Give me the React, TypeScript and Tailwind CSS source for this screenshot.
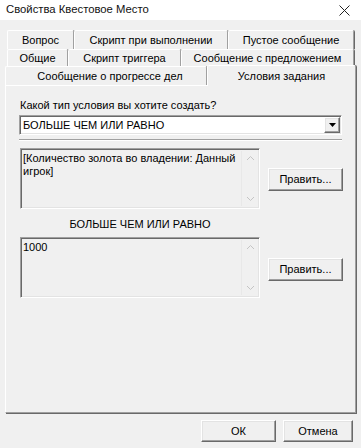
import React from "react";

const font = { fontFamily: '"Liberation Sans", Arial, sans-serif' };

const raised =
  "border border-t-white border-l-white border-r-[#696969] border-b-[#696969] shadow-[inset_-1px_-1px_0_#a0a0a0,inset_1px_1px_0_#e3e3e3] bg-[#f0f0f0]";
const sunken =
  "border border-t-[#a0a0a0] border-l-[#a0a0a0] border-r-white border-b-white shadow-[inset_1px_1px_0_#696969,inset_-1px_-1px_0_#e3e3e3]";

function Tab({ w, label, pl = 0 }: { w: number; label: string; pl?: number }) {
  return (
    <div
      className="h-full flex items-center justify-center border-t border-l border-white border-r border-r-[#a0a0a0] shadow-[1px_0_0_#696969] rounded-t-[2px] text-black leading-none text-[11px]"
      style={{ width: w, paddingLeft: pl }}
    >
      {label}
    </div>
  );
}

function ScrollBox({ children }: { children: React.ReactNode }) {
  return (
    <div className={`w-[240px] h-[61px] flex ${sunken} bg-[#f0f0f0]`}>
      <div className="flex-1 pl-[2px] pt-[3px] text-[11px] leading-[13px] text-black">{children}</div>
      <div className="w-[17px] my-[2px] mr-[1px] border-l border-[#e8e8e8] flex flex-col items-center justify-between py-[4px]">
        <svg width="9" height="6" viewBox="0 0 9 6">
          <path d="M1 5 L4.5 1.5 L8 5" fill="none" stroke="#c4c4c4" strokeWidth="1" />
        </svg>
        <svg width="9" height="6" viewBox="0 0 9 6">
          <path d="M1 1 L4.5 4.5 L8 1" fill="none" stroke="#c4c4c4" strokeWidth="1" />
        </svg>
      </div>
    </div>
  );
}

function Btn({ w, h, label }: { w: number; h: number; label: string }) {
  return (
    <div
      className={`${raised} flex items-center justify-center text-[11px] text-black`}
      style={{ width: w, height: h }}
    >
      {label}
    </div>
  );
}

export default function App() {
  return (
    <div className="w-[361px] h-[448px] bg-[#f0f0f0] overflow-hidden flex flex-col" style={font}>
      {/* Title bar */}
      <div className="h-[20px] bg-white flex items-center justify-between pl-[6px] pr-[11px]">
        <span className="text-[11.3px] text-[#111] leading-none">Свойства Квестовое Место</span>
        <svg width="11" height="11" viewBox="0 0 11 11">
          <path d="M0.5 0.5 L10.5 10.5 M10.5 0.5 L0.5 10.5" stroke="#222" strokeWidth="1" />
        </svg>
      </div>

      {/* Tabs */}
      <div className="mt-[10px] flex flex-col">
        <div className="h-[19px] flex pl-[7px]">
          <Tab w={67} label="Вопрос" />
          <Tab w={154} label="Скрипт при выполнении" />
          <Tab w={126} label="Пустое сообщение" />
        </div>
        <div className="h-[17px] flex pl-[7px]">
          <Tab w={61} label="Общие" />
          <Tab w={113} label="Скрипт триггера" />
          <Tab w={173} label="Сообщение с предложением" />
        </div>
        <div className="h-[19px] flex pl-[5px] items-end">
          <Tab w={202} label="Сообщение о прогрессе дел" pl={8} />
          <div className="w-[149px] h-[21px] mb-[-1px] relative z-10 bg-[#f0f0f0] flex items-start justify-center pt-[5px] border-t border-l border-white border-r border-r-[#a0a0a0] shadow-[1px_0_0_#696969] rounded-t-[2px] text-[11px] leading-none text-black">
            Условия задания
          </div>
        </div>
      </div>

      {/* Panel */}
      <div className="ml-[5px] w-[351px] h-[328px] border-t border-l border-white border-r border-b border-r-[#a0a0a0] border-b-[#a0a0a0] shadow-[1px_1px_0_#696969] flex flex-col">
        <div className="ml-[14px] mt-[13px] text-[11px] leading-[13px] text-black">
          Какой тип условия вы хотите создать?
        </div>
        <div className={`ml-[13px] mt-[3px] w-[323px] h-[20px] bg-white ${sunken} flex items-center`}>
          <span className="flex-1 pl-[3px] text-[11px] text-black leading-none">БОЛЬШЕ ЧЕМ ИЛИ РАВНО</span>
          <div className={`w-[16px] h-[16px] mr-[1px] ${raised} flex items-center justify-center`}>
            <svg width="7" height="4" viewBox="0 0 7 4">
              <path d="M0 0 H7 L3.5 4 Z" fill="#000" />
            </svg>
          </div>
        </div>
        <div className="ml-[13px] mt-[4px] w-[323px] h-[2px] border-t border-[#a0a0a0] border-b border-b-white" />

        <div className="ml-[14px] mt-[7px] flex items-start gap-[8px]">
          <ScrollBox>
            [Количество золота во владении: Данный
            <br />
            игрок]
          </ScrollBox>
          <div className="mt-[20px]">
            <Btn w={75} h={23} label="Править..." />
          </div>
        </div>

        <div className="ml-[14px] mt-[9px] w-[240px] text-center text-[11px] leading-[13px] text-black">
          БОЛЬШЕ ЧЕМ ИЛИ РАВНО
        </div>

        <div className="ml-[14px] mt-[6px] flex items-start gap-[8px]">
          <ScrollBox>1000</ScrollBox>
          <div className="mt-[21px]">
            <Btn w={75} h={23} label="Править..." />
          </div>
        </div>
      </div>

      {/* Footer buttons */}
      <div className="mt-[7px] flex justify-end gap-[7px] pr-[8px]">
        <Btn w={75} h={22} label="ОК" />
        <Btn w={70} h={22} label="Отмена" />
      </div>
    </div>
  );
}
